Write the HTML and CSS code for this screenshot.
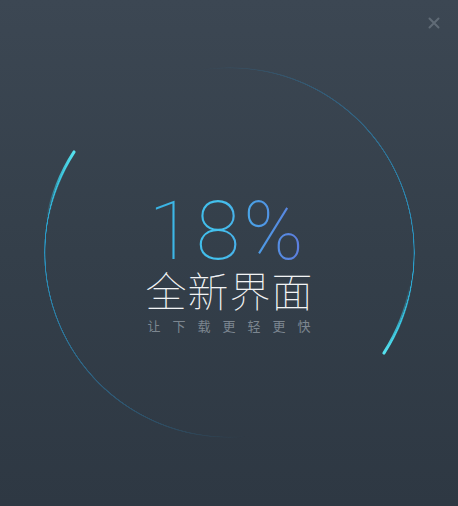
FILE: index.html
```html
<!DOCTYPE html>
<html lang="zh">
<head>
<meta charset="utf-8">
<link rel="stylesheet" href="styles.css">
</head>
<body>
<div class="window">
  <button class="close" aria-label="close">
    <svg width="12" height="12" viewBox="0 0 12 12"><path d="M1.5 1.5L10.5 10.5M10.5 1.5L1.5 10.5" stroke="#606b76" stroke-width="2" stroke-linecap="round"/></svg>
  </button>
  <div class="ring"></div>
  <svg class="heads" width="458" height="506" viewBox="0 0 458 506">
    <defs>
      <linearGradient id="g1" gradientUnits="userSpaceOnUse" x1="47.1" y1="220.4" x2="74.1" y2="151.9">
        <stop offset="0" stop-color="#2fb8dc" stop-opacity="0"/>
        <stop offset="0.6" stop-color="#3ccbe4" stop-opacity="0.8"/>
        <stop offset="1" stop-color="#56e2ee" stop-opacity="1"/>
      </linearGradient>
      <linearGradient id="g2" gradientUnits="userSpaceOnUse" x1="410.9" y1="284.6" x2="383.9" y2="353.1">
        <stop offset="0" stop-color="#2fb8dc" stop-opacity="0"/>
        <stop offset="0.6" stop-color="#3ccbe4" stop-opacity="0.8"/>
        <stop offset="1" stop-color="#56e2ee" stop-opacity="1"/>
      </linearGradient>
    </defs>
    <path d="M47.1 220.4 A184.7 184.7 0 0 1 74.1 151.9" fill="none" stroke="url(#g1)" stroke-width="3" stroke-linecap="round"/>
    <path d="M410.9 284.6 A184.7 184.7 0 0 1 383.9 353.1" fill="none" stroke="url(#g2)" stroke-width="3" stroke-linecap="round"/>
  </svg>
  <div class="content">
    <div class="percent">18%</div>
    <div class="title">全新界面</div>
    <div class="subtitle">让下载更轻更快</div>
  </div>
</div>
</body>
</html>
```
FILE: styles.css
```css
html, body {
  margin: 0;
  padding: 0;
}
body {
  width: 458px;
  height: 506px;
  overflow: hidden;
  background: #343f4a;
}
.window {
  position: relative;
  width: 458px;
  height: 506px;
  background: linear-gradient(180deg, #3c4753 0%, #343f4a 50%, #2e3843 100%);
  font-family: "Noto Sans CJK SC", "Noto Sans", sans-serif;
  display: flex;
  flex-direction: column;
  align-items: center;
}
.close {
  position: absolute;
  top: 17px;
  right: 18px;
  width: 12px;
  height: 12px;
  padding: 0;
  border: 0;
  background: none;
  display: block;
}
.close svg { display: block; }
.ring {
  position: absolute;
  left: 43.5px;
  top: 67px;
  width: 371px;
  height: 371px;
  border-radius: 50%;
  background: conic-gradient(from -9deg,
    rgba(40, 110, 160, 0) 0deg,
    rgba(44, 130, 180, 0.5) 50deg,
    rgba(40, 165, 215, 0.9) 100deg,
    #3ccfe6 132deg,
    transparent 132deg,
    transparent 184deg,
    rgba(40, 110, 160, 0) 184deg,
    rgba(44, 130, 180, 0.5) 234deg,
    rgba(40, 165, 215, 0.9) 284deg,
    #3ccfe6 312deg,
    transparent 312deg);
  -webkit-mask: radial-gradient(circle closest-side, transparent calc(100% - 1.6px), #000 calc(100% - 1.2px), #000 100%, transparent 100%);
  mask: radial-gradient(circle closest-side, transparent calc(100% - 1.6px), #000 calc(100% - 1.2px), #000 100%, transparent 100%);
}
.heads {
  position: absolute;
  left: 0;
  top: 0;
  pointer-events: none;
}
.content {
  position: relative;
  display: flex;
  flex-direction: column;
  align-items: center;
  padding-top: 200px;
}
.percent {
  font-family: "Roboto", "Lato", sans-serif;
  font-weight: 100;
  font-size: 81px;
  line-height: 64px;
  height: 64px;
  letter-spacing: 3px;
  margin-right: 3px;
  background: linear-gradient(90deg, #38b0e2 0%, #44c2ee 45%, #4c9de6 68%, #6079de 100%);
  -webkit-background-clip: text;
  background-clip: text;
  color: transparent;
}
.title {
  font-family: "Noto Sans CJK SC", sans-serif;
  font-weight: 100;
  font-size: 41px;
  line-height: 42px;
  margin-top: 4px;
  color: #f2f4f5;
  letter-spacing: 1px;
  margin-right: -1px;
}
.subtitle {
  font-family: "Noto Sans CJK SC", sans-serif;
  font-size: 13px;
  line-height: 18px;
  margin-top: 7px;
  color: #7c8690;
  letter-spacing: 12px;
  margin-right: -12px;
}
```
